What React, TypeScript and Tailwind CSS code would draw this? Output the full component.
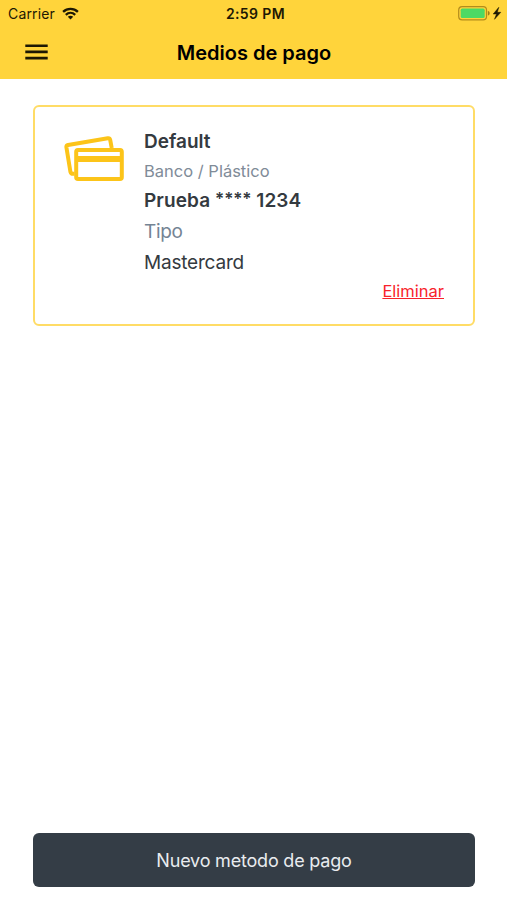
import React from 'react';

const WifiIcon: React.FC = () => (
    <svg className="w-[17px] h-[13px]" viewBox="0 0 17 13" fill="none" stroke="#1d1803" strokeWidth="2.3">
        <path d="M1.1 4.9C5.3 .9 11.7 .9 15.9 4.9" />
        <path d="M3.8 7.8C6.5 5.3 10.5 5.3 13.2 7.8" />
        <path d="M8.5 12.5L5.8 9.8C7.3 8.3 9.7 8.3 11.2 9.8Z" fill="#1d1803" stroke="none" />
    </svg>
);

const BatteryIcon: React.FC = () => (
    <svg className="w-[44px] h-[15px]" viewBox="0 0 44 15">
        <rect x="0.7" y="0.7" width="27.8" height="13.2" rx="3.4" fill="none" stroke="#b38c1c" strokeWidth="1.2" />
        <rect x="2.7" y="2.6" width="24" height="9.4" rx="1.6" fill="#4cd964" />
        <path d="M29.9 5v4.6c1.2-.3 1.8-1.2 1.8-2.3S31.1 5.3 29.9 5z" fill="#a07c18" />
        <path d="M40.8 1.3L35.2 8h3.3l-2 5.3L42.8 6.3h-3.5z" fill="#1d1803" stroke="#1d1803" strokeWidth="0.5" />
    </svg>
);

const MenuIcon: React.FC = () => (
    <svg className="w-[23px] h-4" viewBox="0 0 23 16" fill="none" stroke="#1d1803" strokeWidth="2.6">
        <path d="M.3 1.7H22.7M.3 7.9H22.7M.3 14.1H22.7" />
    </svg>
);

const CardsIcon: React.FC = () => (
    <svg className="w-[60px] h-[46px]" viewBox="0 0 60 46" fill="none" stroke="#fcc419" strokeWidth="4" strokeLinejoin="round">
        <path d="M10.6 37.8H9.4Q7 38 6.4 35.7L2.4 11.3Q2.2 9.4 4 9L43.8 2.3Q45.7 2 46.2 3.9L47.7 12" />
        <rect x="12.2" y="14" width="45.6" height="29" rx="1.8" />
        <path d="M11.5 22.9H58.5" strokeWidth="6" />
    </svg>
);

export default function App() {
    const method = {
        name: 'Default',
        bank: 'Prueba',
        mask: '****',
        lastDigits: '1234',
        type: 'Mastercard',
    };

    return (
        <div className="w-full h-screen flex flex-col bg-white font-['Inter',sans-serif] text-[#343a40]">
            <header className="h-[79px] bg-[#ffd43b] text-[#1d1803]">
                <div className="h-[27px] grid grid-cols-3 items-center pl-2 pr-[5px]">
                    <div className="flex items-center gap-[7px]">
                        <span className="text-[14px] leading-[27px] tracking-[0.15px]">Carrier</span>
                        <WifiIcon />
                    </div>
                    <span className="text-center text-[14px] font-semibold tracking-[0.4px] pl-px">2:59 PM</span>
                    <div className="flex justify-end">
                        <BatteryIcon />
                    </div>
                </div>
                <div className="h-[50px] grid grid-cols-[80px_1fr_80px] items-center">
                    <button className="ml-[25px] w-[23px]" aria-label="Menu">
                        <MenuIcon />
                    </button>
                    <h1 className="pl-px pt-px text-center text-[20px] font-semibold text-black">Medios de pago</h1>
                </div>
            </header>

            <main className="flex-1 flex flex-col justify-between pl-[33px] pr-8 pt-[26px] pb-[13px]">
                <div className="h-[221px] flex rounded-md border-2 border-[#ffdc66] pl-[29px] pr-[29px] pt-[20px]">
                    <div className="w-[80px] pt-[9px]">
                        <CardsIcon />
                    </div>
                    <div className="flex-1 flex flex-col">
                        <h2 className="text-[19px] leading-[30px] font-semibold">{method.name}</h2>
                        <p className="text-[16.5px] leading-[28px] text-[#808b98]">Banco / Plástico</p>
                        <p className="text-[19px] leading-[31px] font-semibold tracking-[0.1px]">
                            {method.bank} <span className="align-[2px] text-[17px] leading-none tracking-[-0.1px]">{method.mask}</span> {method.lastDigits}
                        </p>
                        <p className="text-[19px] leading-[31px] tracking-[-0.3px] text-[#748494]">Tipo</p>
                        <p className="text-[19px] leading-[31px] tracking-[-0.2px]">{method.type}</p>
                        <button className="self-end text-[16.5px] leading-[27px] text-[#f8232b] underline">Eliminar</button>
                    </div>
                </div>

                <button className="h-[54px] rounded-md bg-[#343d46] text-[18px] tracking-[-0.2px] text-[#e9ecef]">
                    Nuevo metodo de pago
                </button>
            </main>
        </div>
    );
}
